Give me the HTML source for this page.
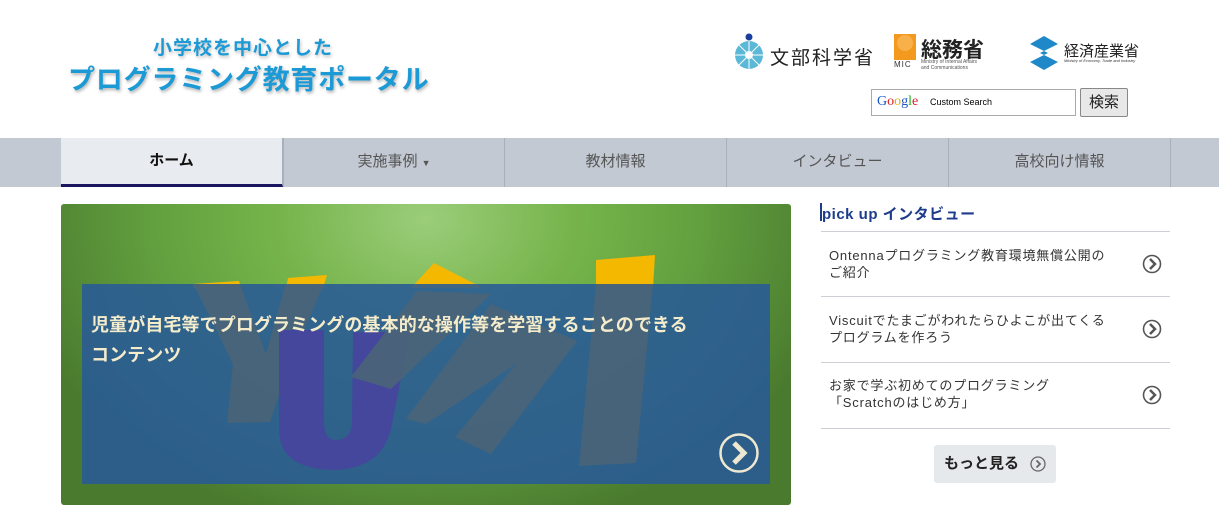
<!DOCTYPE html>
<html><head><meta charset="utf-8">
<style>
*{margin:0;padding:0;box-sizing:border-box}
body{width:1219px;height:521px;background:#fff;font-family:"Liberation Sans","Noto Sans CJK JP",sans-serif;position:relative;overflow:hidden}
.abs{position:absolute}
.t1{left:153px;top:33px;font-size:19px;font-weight:bold;color:#1b9ad6;letter-spacing:1px;text-shadow:1px 2px 3px rgba(0,0,0,.25)}
.t2{left:68px;top:58px;font-size:27px;font-weight:bold;color:#1b9ad6;letter-spacing:.8px;text-shadow:1px 2px 3px rgba(0,0,0,.3)}
.nav{left:0;top:138px;width:1219px;height:49px;background:#c3c9d3}
.nav div{position:absolute;top:0;height:49px;width:222px;border-right:1px solid #a9b0bc;text-align:center;line-height:48px;font-size:15px;color:#555}
.nav .home{background:#e8ebef;color:#111;font-weight:bold;border-bottom:3px solid #1c1560;line-height:46px}
.hero{left:61px;top:204px;width:730px;height:301px;border-radius:3px;background:radial-gradient(ellipse 420px 320px at 50% 5%,#9bcd7a 0%,#76b44b 35%,#62a03f 65%,#4a7a2e 100%);overflow:hidden}
.item{left:821px;width:349px;border-top:1px solid #ccd0d6;font-size:13px;color:#333;letter-spacing:.8px;line-height:17px}
.arr{position:absolute;right:8px;width:20px;height:20px}
</style></head><body>
<div class="abs t1">小学校を中心とした</div>
<div class="abs t2">プログラミング教育ポータル</div>

<svg class="abs" style="left:733px;top:32px" width="40" height="40"><circle cx="16" cy="5" r="3.5" fill="#1a3f9c"/><circle cx="16" cy="23" r="14" fill="#5bb8d6"/><g stroke="#fff" stroke-width="1"><line x1="16" y1="9" x2="16" y2="37"/><line x1="2" y1="23" x2="30" y2="23"/><line x1="6" y1="13" x2="26" y2="33"/><line x1="26" y1="13" x2="6" y2="33"/></g><circle cx="16" cy="23" r="4" fill="#fff"/></svg>
<div class="abs" style="left:770px;top:43px;font-size:19px;color:#222;letter-spacing:2px">文部科学省</div>

<div class="abs" style="left:894px;top:34px;width:22px;height:26px;background:#f39a1e"></div>
<div class="abs" style="left:897px;top:35px;width:16px;height:16px;border-radius:50%;background:#f7b04a"></div>
<div class="abs" style="left:894px;top:60px;font-size:8px;color:#333;letter-spacing:1px">MIC</div>
<div class="abs" style="left:921px;top:34px;font-size:21px;font-weight:bold;color:#222">総務省</div>
<div class="abs" style="left:921px;top:59px;font-size:5px;color:#555;line-height:6px">Ministry of Internal Affairs<br>and Communications</div>

<svg class="abs" style="left:1029px;top:36px" width="30" height="34"><path d="M15 0L29 8L11 17L29 26L15 34L1 26L19 17L1 8Z" fill="#1e88c8"/></svg>
<div class="abs" style="left:1064px;top:40px;font-size:15px;color:#222">経済産業省</div>
<div class="abs" style="left:1064px;top:58px;font-size:4px;color:#333;font-style:italic">Ministry of Economy, Trade and Industry</div>

<div class="abs" style="left:871px;top:89px;width:205px;height:27px;border:1px solid #aaa;background:#fff"></div>
<div class="abs" style="left:877px;top:94px;font-family:'Liberation Serif',serif;font-size:14px"><span style="color:#1a56c8">G</span><span style="color:#d22">o</span><span style="color:#e8a800">o</span><span style="color:#1a56c8">g</span><span style="color:#2a2">l</span><span style="color:#d22">e</span></div>
<div class="abs" style="left:930px;top:97px;font-size:9px;color:#000">Custom Search</div>
<div class="abs" style="left:1080px;top:88px;width:48px;height:29px;border:1px solid #888;background:#e8e8e8;border-radius:2px;font-size:15px;text-align:center;line-height:27px;color:#222">検索</div>

<div class="abs nav">
<div class="home" style="left:61px">ホーム</div>
<div style="left:283px;border-left:1px solid #a9b0bc;width:222px">実施事例 <span style="font-size:9px">▼</span></div>
<div style="left:505px">教材情報</div>
<div style="left:727px">インタビュー</div>
<div style="left:949px">高校向け情報</div>
</div>

<div class="abs hero">
<svg class="abs" style="left:0;top:0" width="730" height="301">
<polygon points="132,84 132,80 178,77 180,84" fill="#f5b800"/>
<polygon points="225,84 227,74 266,71 262,84" fill="#f5b800"/>
<polygon points="350,84 373,59 418,82 418,84" fill="#f5b800"/>
<polygon points="535,84 535,56 594,51 592,84" fill="#f5b800"/>
</svg>
<div class="abs" style="left:21px;top:80px;width:688px;height:200px;background:rgba(40,90,150,.88)"></div>
<svg class="abs" style="left:0;top:0" width="730" height="301">
<defs><clipPath id="c"><rect x="21" y="80" width="688" height="200"/></clipPath></defs>
<g clip-path="url(#c)">
<polygon points="132,79 178,78 205,150 226,75 266,73 230,155 209,218 166,219 172,160" fill="#4a6478" opacity=".9"/>
<path d="M218 126 L263 126 L263 220 Q264 236 275 236 Q289 236 291 220 L292 128 L349 128 L330 225 Q320 266 270 266 Q218 264 218 225Z" fill="#44479c"/>
<polygon points="290,173 356,87 430,90 330,185" fill="#4a6478" opacity=".9"/>
<polygon points="345,215 430,100 516,137 430,250 394,233 455,160 365,220" fill="#4a6478" opacity=".9"/>
<polygon points="535,79 592,79 575,259 518,262" fill="#4a6478" opacity=".9"/>
</g>
</svg>
<div class="abs" style="left:30px;top:106px;width:670px;font-size:18px;font-weight:bold;color:#f5eccc;line-height:30px;letter-spacing:.1px">児童が自宅等でプログラミングの基本的な操作等を学習することのできる<br>コンテンツ</div>
<svg class="abs" style="left:657px;top:228px" width="42" height="42"><circle cx="21" cy="21" r="18.5" fill="none" stroke="#eee8d0" stroke-width="2.5"/><path d="M16 11L26 21L16 31" fill="none" stroke="#eee8d0" stroke-width="5"/></svg>
</div>

<div class="abs" style="left:820px;top:203px;width:2px;height:18px;background:#1e3c8c"></div>
<div class="abs" style="left:822px;top:203px;font-size:15px;font-weight:bold;color:#1e3c8c;letter-spacing:.5px">pick up インタビュー</div>

<div class="abs item" style="top:231px;height:65px;padding:15px 8px"><div style="width:300px">Ontennaプログラミング教育環境無償公開の<br>ご紹介</div><svg class="arr" style="top:22px" width="20" height="20"><circle cx="10" cy="10" r="8.5" fill="none" stroke="#555" stroke-width="1.6"/><path d="M8 5L13 10L8 15" fill="none" stroke="#555" stroke-width="2.5"/></svg></div>
<div class="abs item" style="top:296px;height:66px;padding:15px 8px"><div style="width:320px">Viscuitでたまごがわれたらひよこが出てくる<br>プログラムを作ろう</div><svg class="arr" style="top:22px" width="20" height="20"><circle cx="10" cy="10" r="8.5" fill="none" stroke="#555" stroke-width="1.6"/><path d="M8 5L13 10L8 15" fill="none" stroke="#555" stroke-width="2.5"/></svg></div>
<div class="abs item" style="top:362px;height:66px;padding:14px 8px"><div style="width:300px">お家で学ぶ初めてのプログラミング<br>「Scratchのはじめ方」</div><svg class="arr" style="top:22px" width="20" height="20"><circle cx="10" cy="10" r="8.5" fill="none" stroke="#555" stroke-width="1.6"/><path d="M8 5L13 10L8 15" fill="none" stroke="#555" stroke-width="2.5"/></svg></div>
<div class="abs" style="left:821px;top:428px;width:349px;border-top:1px solid #ccd0d6"></div>

<div class="abs" style="left:934px;top:445px;width:122px;height:38px;background:#e6e9ec;border-radius:3px;font-size:15px;font-weight:bold;color:#222;line-height:38px;padding-left:10px">もっと見る<svg style="position:absolute;left:96px;top:11px" width="16" height="16"><circle cx="8" cy="8" r="7" fill="none" stroke="#666" stroke-width="1.3"/><path d="M6.5 4.5L10 8L6.5 11.5" fill="none" stroke="#666" stroke-width="1.8"/></svg></div>
</body></html>
